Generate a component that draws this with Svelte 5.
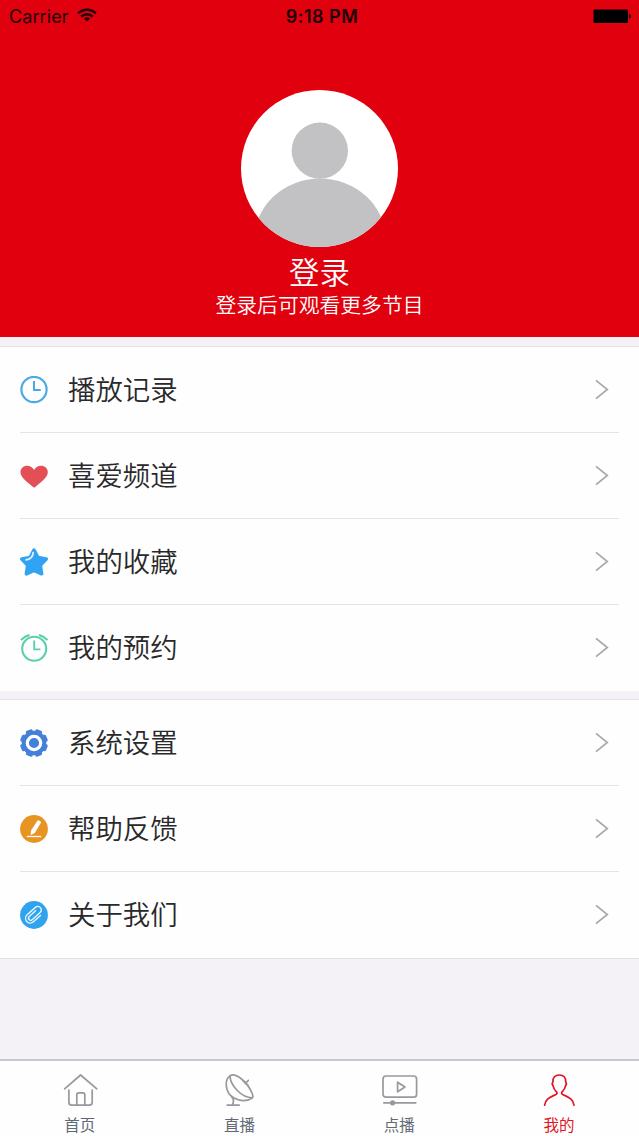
<script>
    const groups = [
        [
            { icon: "clock", label: "播放记录" },
            { icon: "heart", label: "喜爱频道" },
            { icon: "star", label: "我的收藏" },
            { icon: "alarm", label: "我的预约" },
        ],
        [
            { icon: "gear", label: "系统设置" },
            { icon: "pencil", label: "帮助反馈" },
            { icon: "clip", label: "关于我们" },
        ],
    ];

    const tabs = [
        { id: "home", label: "首页" },
        { id: "live", label: "直播" },
        { id: "video", label: "点播" },
        { id: "mine", label: "我的" },
    ];

    let active = "mine";

    const teeth = [0, 45, 90, 135, 180, 225, 270, 315];
</script>

<div class="screen">
    <header class="profile">
        <div class="status">
            <div class="carrier">
                <span>Carrier</span>
                <svg width="20" height="14" viewBox="0 0 20 14" fill="none" stroke="#1c0003" stroke-width="2.5">
                    <path d="M1.2 5.3a12.6 12.6 0 0 1 17.6 0" />
                    <path d="M4.3 8.6a8.2 8.2 0 0 1 11.4 0" />
                    <path d="M10 13.6l-3-3a4.4 4.4 0 0 1 6 0z" fill="#1c0003" stroke="none" />
                </svg>
            </div>
            <span class="time">9:18 PM</span>
            <div class="battery">
                <svg width="38" height="15" viewBox="0 0 38 15">
                    <rect x="0.5" y="0.4" width="34.5" height="13.6" rx="1.5" />
                    <path d="M36 4.7c2.4.8 2.4 4.2 0 5z" />
                </svg>
            </div>
        </div>
        <svg class="avatar" viewBox="0 0 156 156">
            <defs>
                <clipPath id="round"><circle cx="78" cy="78" r="78" /></clipPath>
            </defs>
            <circle cx="78" cy="78" r="78" fill="#fff" />
            <g fill="#c2c1c3" clip-path="url(#round)">
                <circle cx="78.3" cy="60.3" r="28" />
                <ellipse cx="78.5" cy="148" rx="65" ry="60" />
            </g>
        </svg>
        <div class="login">登录</div>
        <div class="hint">登录后可观看更多节目</div>
    </header>

    {#each groups as items}
        <ul class="group">
            {#each items as item}
                <li class="row">
                    <svg class="icon" viewBox="0 0 28 28" fill="none">
                        {#if item.icon === "clock"}
                            <g stroke="#4aaae4" stroke-width="2.2">
                                <circle cx="14" cy="13.5" r="12.6" />
                                <path d="M14 5v9h6.800" stroke-width="2" />
                            </g>
                        {:else if item.icon === "heart"}
                            <path
                                d="M14.2 25.800C9 21.400.5 16 .5 10.200.5 6.200 3.600 3.700 7 3.700c3.200 0 5.700 1.800 7.100 4.400 1.300-2.600 3.800-4.400 6.900-4.400 3.600 0 6.800 2.500 6.800 6.500C27.800 16 19 21.400 14.200 25.800z"
                                fill="#e25055"
                            />
                        {:else if item.icon === "star"}
                            <path
                                d="M14 2.200l3.900 7.400 8.300 1.500-5.900 6.200 1.300 8.500L14 22.400l-7.600 3.400 1.300-8.500-5.900-6.200 8.300-1.500z"
                                fill="#31a3f2"
                                stroke="#31a3f2"
                                stroke-width="3.6"
                                stroke-linejoin="round"
                            />
                            <path d="M13.200 4.600c-.4 4.400-2.400 6.600-7.200 7.200" stroke="#dff1fd" stroke-width="1.800" stroke-linecap="round" />
                        {:else if item.icon === "alarm"}
                            <g stroke="#5bcfac" stroke-width="2.1">
                                <circle cx="14.2" cy="14.700" r="12" />
                                <path d="M14.200 6.500v8.900h6.200" stroke-width="1.900" />
                                <path d="M1 6.200Q4 2.400 9.400.9M27.400 6.200Q24.400 2.400 19 .9" />
                            </g>
                        {:else if item.icon === "gear"}
                            <g fill="#4380da">
                                <circle cx="14" cy="14" r="12.300" />
                                {#each teeth as angle}
                                    <rect x="10.400" y="0.100" width="7.200" height="5" rx="1.800" transform="rotate({angle + 22.5} 14 14)" />
                                {/each}
                            </g>
                            <circle cx="14" cy="14" r="6.700" stroke="#fff" stroke-width="3.200" />
                        {:else if item.icon === "pencil"}
                            <circle cx="14" cy="14" r="13.9" fill="#e79423" />
                            <path d="M17.400 5.700q.6-.7 1.400-.3l1.700 1q.8.5.4 1.300L14.800 18l-4.100 2 .3-4.400z" fill="#fff" />
                            <path d="M6.800 21.500h14.400" stroke="#fff" stroke-width="1.300" />
                        {:else}
                            <circle cx="14" cy="14" r="13.9" fill="#31a3ee" />
                            <path
                                transform="rotate(48 14 14)"
                                d="M18.700 9.500V19a4.700 4.700 0 0 1-9.400 0V7.800a3.500 3.500 0 0 1 7 0v10.700a2.200 2.200 0 0 1-4.400 0V10"
                                stroke="#e8f6ff"
                                stroke-width="1.400"
                                stroke-linecap="round"
                            />
                        {/if}
                    </svg>
                    <span class="label">{item.label}</span>
                    <svg class="arrow" width="14" height="22" viewBox="0 0 14 22" fill="none" stroke="#a9a8ac" stroke-width="1.7">
                        <path d="M1 1.3L12.300 10.500 1 19.700" />
                    </svg>
                </li>
            {/each}
        </ul>
    {/each}

    <nav class="tabs">
        {#each tabs as tab}
            <button class="tab" class:active={active === tab.id} on:click={() => (active = tab.id)}>
                <svg width="38" height="36" viewBox="0 0 38 36" fill="none" stroke="currentColor" stroke-width="1.7" stroke-linecap="round" stroke-linejoin="round">
                    {#if tab.id === "home"}
                        <path d="M3.600 16.800L19.600 3 35.800 16.800" />
                        <path d="M7.900 18v12.200q0 3 3 3h17.300q3 0 3-3V18" />
                        <path d="M15.800 33V22.900q0-2 2-2h4q2 0 2 2V33" />
                    {:else if tab.id === "live"}
                        <path d="M9.200 3.600C14.500.3 26 9.500 31 21c1 2.400 1.200 3.900.4 4.800C24 31.500 9.500 28.200 6 17.500 4.400 11.700 5.200 6.600 9.200 3.600z" />
                        <path d="M9 3.800C8.800 12.400 20 25.800 31.300 25.800" />
                        <path d="M22 8.600l5 4.800M24.200 11.300l3.200-3" />
                        <path d="M11 25.400c2 2 1.800 4.600.4 7.400M6.200 33.100h12" />
                    {:else if tab.id === "video"}
                        <rect x="3" y="4" width="33.600" height="21.200" rx="3" />
                        <path d="M17.600 10.200v9.600l7.400-4.800zM3.800 30.800h32" />
                        <circle cx="12.600" cy="30.800" r="1.800" fill="currentColor" />
                    {:else}
                        <path d="M4.600 33.200c.6-6.800 6.400-8.200 11.400-10.800 1.400-.8 1.300-1.700.2-2.800-1.900-1.900-2.700-3.600-3.200-6-1-1.200-.9-2.600-.1-3.600C12.600 5.400 15 3 19.300 3s6.700 2.400 6.400 7c.8 1 .9 2.400-.1 3.600-.5 2.400-1.300 4.100-3.200 6-1.100 1.100-1.200 2 .2 2.800 5 2.600 10.800 4 11.400 10.800" />
                    {/if}
                </svg>
                <span>{tab.label}</span>
            </button>
        {/each}
    </nav>
</div>

<style>
    :global(body) {
        margin: 0;
    }

    .screen {
        display: flex;
        flex-direction: column;
        height: 1136px;
        overflow: hidden;
        background-color: #f4f2f6;
        font-family: "Noto Sans CJK SC", sans-serif;
        font-weight: 350;
    }

    /* Red header with the status bar and the login prompt */
    .profile {
        display: flex;
        flex-direction: column;
        align-items: center;
        height: 337px;
        color: #fff;
        background-color: #e0000e;
    }

    .status {
        display: grid;
        grid-template-columns: 1fr auto 1fr;
        align-items: center;
        box-sizing: border-box;
        width: 100%;
        height: 32px;
        padding: 0 8px 0 9px;
        color: #1c0003;
        font-family: Inter, sans-serif;
        font-size: 18px;
        font-weight: 400;
    }

    .carrier {
        display: flex;
        align-items: center;
        gap: 8px;
        letter-spacing: 0.1px;
    }

    .carrier svg {
        margin-bottom: 2px;
    }

    .time {
        padding-left: 4px;
        font-weight: 600;
        letter-spacing: 0.5px;
    }

    .battery {
        display: flex;
        justify-content: flex-end;
        fill: #000;
    }

    .avatar {
        width: 157px;
        height: 157px;
        margin-top: 58px;
    }

    .login {
        margin-top: 4px;
        font-size: 30.4px;
        line-height: 40px;
    }

    .hint {
        margin-top: 1px;
        font-size: 20.8px;
        line-height: 24px;
    }

    /* Menu groups */
    .group {
        margin: 9px 0 0;
        padding: 0;
        list-style: none;
        background-color: #fefefe;
        border-top: 1px solid #e2e1e4;
    }

    .group + .group {
        margin-top: 8px;
        border-bottom: 1px solid #e2e1e4;
    }

    .row {
        display: flex;
        align-items: center;
        box-sizing: border-box;
        height: 86px;
        margin: 0 20px;
        border-bottom: 1px solid #e4e3e7;
    }

    .row:last-child {
        border-bottom-color: transparent;
    }

    .icon {
        width: 28px;
        height: 28px;
    }

    .label {
        flex: 1;
        margin-left: 20px;
        padding-bottom: 3px;
        color: #29282b;
        font-size: 27.4px;
        line-height: 40px;
    }

    .arrow {
        margin-right: 10px;
    }

    /* Bottom tab bar */
    .tabs {
        display: flex;
        box-sizing: border-box;
        height: 77px;
        margin-top: auto;
        background-color: #fefefe;
        border-top: 2px solid #c9c8cc;
    }

    .tab {
        flex: 1;
        display: flex;
        flex-direction: column;
        align-items: center;
        padding: 11px 0 0;
        border: none;
        background: none;
        color: #99989d;
        font-family: inherit;
        font-size: 15.5px;
        line-height: 20px;
    }

    .tab span {
        margin-top: 6px;
        color: #5f6974;
    }

    .tab.active,
    .tab.active span {
        color: #df1524;
    }
</style>
